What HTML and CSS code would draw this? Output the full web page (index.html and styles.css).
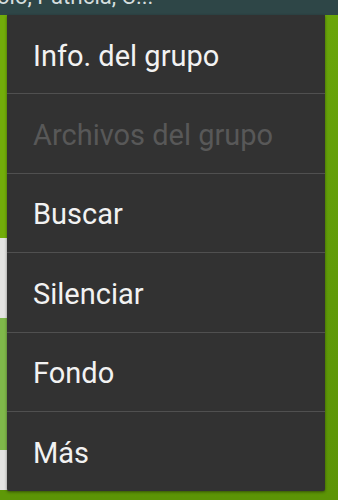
FILE: index.html
```html
<!DOCTYPE html>
<html lang="es">
<head>
    <meta charset="UTF-8">
    <meta name="viewport" content="width=device-width, initial-scale=1.0">
    <title>Menú del grupo</title>
    <link rel="stylesheet" href="styles.css">
</head>
<body>
    <div class="screen">
        <div class="topbar"><span class="title">olo, Patricia, C...</span></div>
        <div class="chat">
            <div class="edge">
                <div class="edge-green"></div>
                <div class="edge-white"></div>
                <div class="edge-light"></div>
                <div class="edge-white short"></div>
                <div class="edge-green bottom"></div>
            </div>
        </div>

        <ul class="menu">
            <li class="item">Info. del grupo</li>
            <li class="item disabled">Archivos del grupo</li>
            <li class="item">Buscar</li>
            <li class="item">Silenciar</li>
            <li class="item">Fondo</li>
            <li class="item">Más</li>
        </ul>
    </div>
</body>
</html>
```

FILE: styles.css
```css
* {
    box-sizing: border-box;
}

body {
    margin: 0;
    font-family: Roboto, "Noto Sans", sans-serif;
}

.screen {
    position: relative;
    width: 338px;
    height: 500px;
    overflow: hidden;
    display: flex;
    flex-direction: column;
    background: linear-gradient(to bottom, #6aa60a 0%, #5f9a08 60%, #5c9406 100%);
}

.topbar {
    height: 15px;
    background: #2e4647;
    overflow: hidden;
    flex-shrink: 0;
}

.title {
    display: block;
    margin: -15px 0 0 -3px;
    font-size: 22px;
    line-height: 24px;
    color: #d5dede;
    white-space: nowrap;
}

.chat {
    flex: 1;
    display: flex;
}

.edge {
    width: 10px;
    display: flex;
    flex-direction: column;
}

.edge-green {
    height: 223px;
    background: #72ad0a;
}

.edge-white {
    height: 80px;
    background: #e4e4e2;
}

.edge-light {
    height: 132px;
    background: #7fb84a;
}

.edge-white.short {
    height: 40px;
}

.edge-green.bottom {
    flex: 1;
    background: #5e9808;
}

.menu {
    position: absolute;
    top: 15px;
    left: 7px;
    width: 318px;
    margin: 0;
    padding: 0;
    list-style: none;
    background: #323232;
    box-shadow: 0 1px 3px rgba(0, 0, 0, 0.45);
    border-radius: 0 0 2px 2px;
}

.item {
    height: 79.5px;
    display: flex;
    align-items: center;
    padding: 3px 0 0 26px;
    font-size: 29px;
    color: #f2f2f2;
    border-top: 1.5px solid #505050;
}

.item:first-child {
    height: 78px;
    border-top: none;
}

.item.disabled {
    color: #585858;
}
```
